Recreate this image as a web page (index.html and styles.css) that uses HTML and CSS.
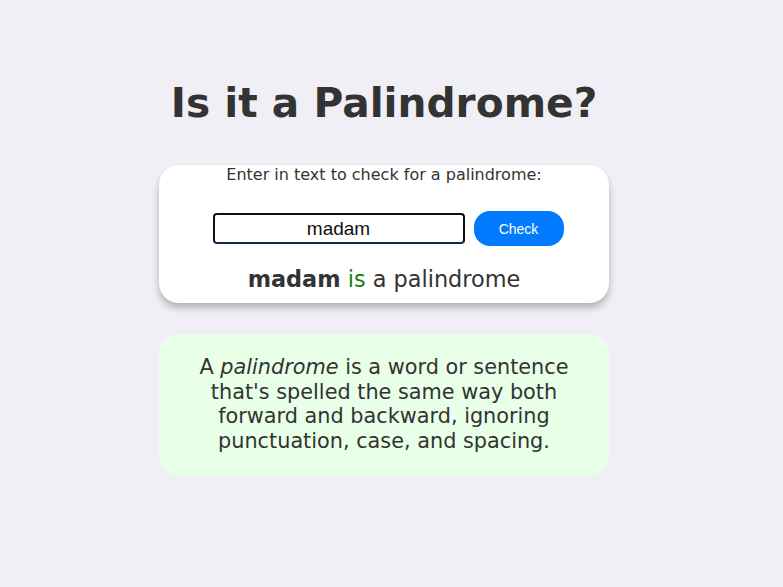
FILE: index.html
```html
<!DOCTYPE html>
<html lang="en">
<head>
<meta charset="utf-8">
<title>Palindrome Checker</title>
<link rel="stylesheet" href="styles.css">
</head>
<body>
<main class="container">
  <h1 class="title">Is it a Palindrome?</h1>
  <div class="checker">
    <label class="label" for="text-input">Enter in text to check for a palindrome:</label>
    <div class="controls">
      <input class="text-input" id="text-input" type="text" value="madam">
      <button class="check-btn" type="button">Check</button>
    </div>
    <p class="result"><strong>madam</strong> <span class="yes">is</span> a palindrome</p>
  </div>
  <div class="definition">
    <p>A <em>palindrome</em> is a word or sentence that's spelled the same way both forward and backward, ignoring punctuation, case, and spacing.</p>
  </div>
</main>
</body>
</html>
```
FILE: styles.css
```css
* { box-sizing: border-box; }
html, body { margin: 0; padding: 0; }
body {
  background: #f0eff6;
  font-family: "DejaVu Sans", Verdana, sans-serif;
  color: #333;
  min-height: 100vh;
  padding-right: 15px;
}
.container {
  width: 450px;
  margin: 0 auto;
  display: flex;
  flex-direction: column;
  align-items: center;
  padding-top: 79px;
}
.title {
  margin: 0 0 38px;
  font-size: 40.7px;
  line-height: 48px;
  font-weight: bold;
  color: #333;
  text-align: center;
  white-space: nowrap;
}
.checker {
  width: 450px;
  background: #fff;
  border-radius: 20px;
  box-shadow: 0 5px 7px rgba(0,0,0,0.25);
  display: flex;
  flex-direction: column;
  align-items: center;
  padding: 0 0 11px;
}
.label {
  font-size: 16px;
  line-height: 20px;
  color: #333;
}
.controls {
  display: flex;
  align-items: center;
  gap: 9px;
  margin-top: 26px;
  padding-left: 8px;
}
.text-input {
  width: 252px;
  height: 31px;
  border: 2px solid #111;
  border-bottom-color: #0f2a4a;
  border-radius: 4px;
  font-family: "Liberation Sans", Arial, sans-serif;
  font-size: 19px;
  text-align: center;
  color: #111;
  padding: 0 6px;
  background: #fff;
}
.check-btn {
  width: 90px;
  height: 35px;
  border: none;
  border-radius: 16px;
  background: #007bff;
  color: #fff;
  font-family: "Liberation Sans", Arial, sans-serif;
  font-size: 14px;
  padding: 0;
}
.result {
  margin: 20px 0 0;
  font-size: 22.4px;
  line-height: 26px;
  color: #333;
}
.result strong { font-weight: bold; }
.yes { color: #1a7f1a; }
.definition {
  width: 450px;
  margin-top: 31px;
  background: #e8ffe8;
  border-radius: 20px;
  padding: 21px 30px 21px;
  text-align: center;
}
.definition p {
  margin: 0;
  font-size: 20.8px;
  line-height: 24.7px;
  color: #333;
}
```
